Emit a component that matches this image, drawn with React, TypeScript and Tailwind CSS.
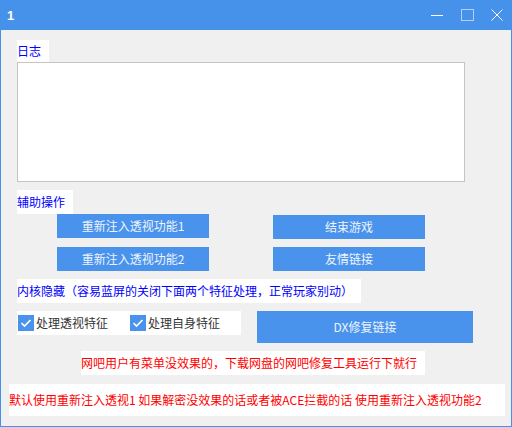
import React from "react";

const font = { fontFamily: '"Noto Sans CJK SC", "Liberation Sans", sans-serif' };

function Btn({ children, className }: { children: React.ReactNode; className: string }) {
  return (
    <div className={`flex items-center justify-center bg-[#4a93ec] text-[#eef4fd] text-[12px] leading-none ${className}`}>
      {children}
    </div>
  );
}

function Check({ label }: { label: string }) {
  return (
    <div className="flex items-center">
      <div className="w-[16px] h-[16px] bg-[#4a93ec] flex items-center justify-center">
        <svg width="12" height="10" viewBox="0 0 12 10">
          <path d="M1.5 5 L4.5 8 L10.5 2" stroke="#ffffff" strokeWidth="1.6" fill="none" />
        </svg>
      </div>
      <span className="ml-[2px] text-[12px] text-[#333333] leading-none">{label}</span>
    </div>
  );
}

export default function App() {
  return (
    <div className="w-[512px] h-[427px] flex flex-col bg-[#4691ea]" style={font}>
      <div className="h-[30px] flex items-center shrink-0">
        <span className="ml-[7px] text-white font-bold text-[13px] leading-none" style={{ fontFamily: '"Liberation Sans", sans-serif' }}>1</span>
        <div className="ml-auto flex">
          <div className="w-[30px] h-[30px] flex items-center justify-center">
            <svg width="12" height="12" viewBox="0 0 12 12"><path d="M0 6.5 H12" stroke="#ffffff" strokeWidth="1" /></svg>
          </div>
          <div className="w-[30px] h-[30px] flex items-center justify-center">
            <svg width="13" height="12" viewBox="0 0 13 12"><rect x="0.5" y="0.5" width="12" height="11" stroke="#b3d0f6" strokeWidth="1" fill="none" /></svg>
          </div>
          <div className="w-[30px] h-[30px] flex items-center justify-center">
            <svg width="12" height="12" viewBox="0 0 12 12"><path d="M0.5 0.5 L11.5 11.5 M11.5 0.5 L0.5 11.5" stroke="#ffffff" strokeWidth="1" /></svg>
          </div>
        </div>
      </div>
      <div className="flex-1 mx-[1px] mb-[1px] bg-[#f0f0f0] flex flex-col items-start">
        <div className="ml-[16px] mt-[10px] w-[32px] h-[22px] bg-white flex items-center text-[12px] text-[#0000ff] leading-none">日志</div>
        <div className="ml-[16px] w-[448px] h-[120px] bg-white border border-[#c4c4c4]" />
        <div className="ml-[16px] mt-[8px] w-[56px] h-[24px] bg-white flex items-center text-[12px] text-[#0000ff] leading-none">辅助操作</div>
        <div className="flex items-start ml-[56px]">
          <Btn className="w-[152px] h-[24px]">重新注入透视功能1</Btn>
          <Btn className="ml-[64px] mt-[1px] w-[152px] h-[24px]">结束游戏</Btn>
        </div>
        <div className="flex items-start ml-[56px] mt-[8px]">
          <Btn className="w-[152px] h-[24px]">重新注入透视功能2</Btn>
          <Btn className="ml-[64px] w-[152px] h-[24px]">友情链接</Btn>
        </div>
        <div className="ml-[16px] mt-[8px] w-[344px] h-[24px] bg-white flex items-center text-[12px] text-[#0000ff] leading-none whitespace-nowrap">
          内核隐藏（容易蓝屏的关闭下面两个特征处理，正常玩家别动）
        </div>
        <div className="flex items-start ml-[16px] mt-[8px]">
          <div className="w-[224px] h-[24px] bg-white flex items-center pl-[1px]">
            <Check label="处理透视特征" />
            <div className="ml-[22px]">
              <Check label="处理自身特征" />
            </div>
          </div>
          <Btn className="ml-[16px] w-[216px] h-[32px]">DX修复链接</Btn>
        </div>
        <div className="ml-[80px] mt-[8px] w-[344px] h-[24px] bg-white flex items-center text-[12px] text-[#ff0000] leading-none whitespace-nowrap">
          网吧用户有菜单没效果的，下载网盘的网吧修复工具运行下就行
        </div>
        <div className="ml-[8px] mt-[9px] w-[496px] h-[32px] bg-white flex items-center text-[12px] text-[#ff0000] leading-none whitespace-nowrap">
          默认使用重新注入透视1 如果解密没效果的话或者被ACE拦截的话 使用重新注入透视功能2
        </div>
      </div>
    </div>
  );
}
